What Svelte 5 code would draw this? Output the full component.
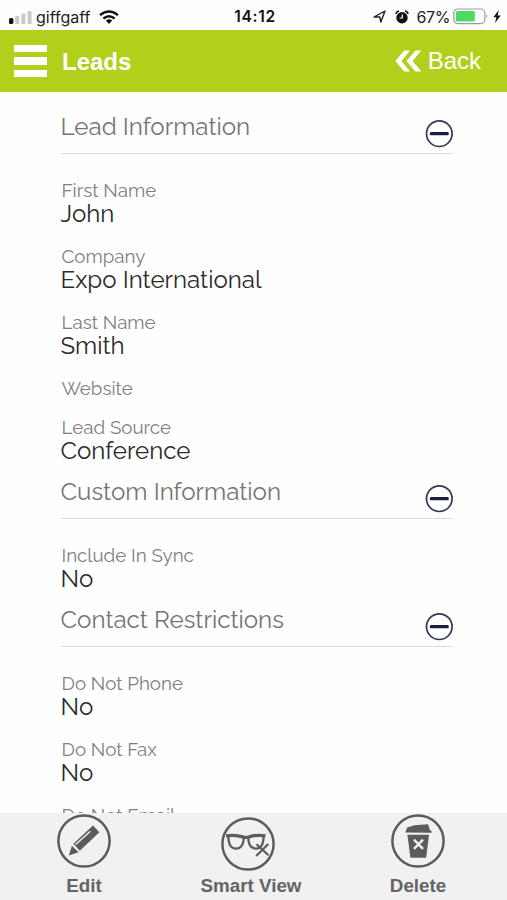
<script lang="ts">
  type Field = { label: string; value?: string };
  type Section = { title: string; fields: Field[] };

  const sections: Section[] = [
    {
      title: 'Lead Information',
      fields: [
        { label: 'First Name', value: 'John' },
        { label: 'Company', value: 'Expo International' },
        { label: 'Last Name', value: 'Smith' },
        { label: 'Website' },
        { label: 'Lead Source', value: 'Conference' },
      ],
    },
    {
      title: 'Custom Information',
      fields: [{ label: 'Include In Sync', value: 'No' }],
    },
    {
      title: 'Contact Restrictions',
      fields: [
        { label: 'Do Not Phone', value: 'No' },
        { label: 'Do Not Fax', value: 'No' },
        { label: 'Do Not Email' },
      ],
    },
  ];

  let closed = $state<Record<string, boolean>>({});
</script>

<div class="app">
  <div class="status">
    <div class="carrier">
      <svg width="24" height="14" viewBox="0 0 24 14">
        <rect x="0" y="8" width="4.4" height="6" rx="1.5" fill="#111" />
        <g fill="#c9c9c9">
          <rect x="6.2" y="6" width="4" height="8" rx="1" />
          <rect x="12.4" y="3.5" width="4" height="10.5" rx="1" />
          <rect x="18.6" y="1" width="4" height="13" rx="1" />
        </g>
      </svg>
      <span class="network">giffgaff</span>
      <svg class="wifi" width="20" height="14" viewBox="0 0 20 14">
        <g fill="none" stroke="#111" stroke-width="2.4">
          <path d="M1 5.2Q10-2.3 19 5.2" />
          <path d="M4.4 8.5Q10 3.8 15.6 8.5" />
        </g>
        <path d="M6.8 10.5Q10 7.8 13.2 10.5L10 14Z" fill="#111" />
      </svg>
    </div>
    <span class="time">14:12</span>
    <div class="power">
      <svg width="13" height="13" viewBox="0 0 13 13">
        <path d="M1 7L12 1L7.8 12L6.8 6.9Z" fill="none" stroke="#222" stroke-width="1.4" stroke-linejoin="round" />
      </svg>
      <svg class="alarm" width="14" height="14" viewBox="0 0 14 14">
        <circle cx="7" cy="7.7" r="5.7" fill="#111" />
        <path d="M1 4Q1.4 1.4 4 1M10 1Q12.6 1.4 13 4" fill="none" stroke="#111" stroke-width="1.6" />
        <path d="M7.3 4.5V8H4.6" fill="none" stroke="#fff" stroke-width="1.2" />
      </svg>
      <span class="percent">67%</span>
      <svg class="battery" width="36" height="17" viewBox="0 0 36 17">
        <rect x="0.8" y="1" width="31" height="14.6" rx="4" fill="#fff" stroke="#9b9b9b" stroke-width="1.2" />
        <rect x="2.8" y="3" width="19" height="10.6" rx="1.5" fill="#4cd964" />
        <path d="M33.5 6Q35.4 8.2 33.5 10.5Z" fill="#9b9b9b" />
      </svg>
      <svg class="bolt" width="8" height="13" viewBox="0 0 8 13">
        <path d="M5.8 0L0.4 7.2H3.4L2 13L7.7 5.4H4.6Z" fill="#111" />
      </svg>
    </div>
  </div>

  <header>
    <button class="menu" type="button" aria-label="Menu"><i></i><i></i><i></i></button>
    <h1>Leads</h1>
    <button class="back" type="button">
      <svg width="27" height="22" viewBox="0 0 27 22">
        <path d="M9.2 0.5H15L6.5 11L15 21.5H9.2L0.3 11ZM20.4 0.5H26.2L17.7 11L26.2 21.5H20.4L11.5 11Z" fill="#fff" />
      </svg>
      <span>Back</span>
    </button>
  </header>

  <main>
    {#each sections as s (s.title)}
      <section>
        <div class="head">
          <h2>{s.title}</h2>
          <button class="toggle" type="button" aria-label={s.title} onclick={() => (closed[s.title] = !closed[s.title])}>
            <svg width="28" height="28" viewBox="0 0 28 28">
              <circle cx="14.3" cy="13.7" r="12.8" fill="none" stroke="#343850" stroke-width="1.7" />
              <path d="M6.3 13.7H22.3" stroke="#171e41" stroke-width="3.2" stroke-linecap="round" />
            </svg>
          </button>
        </div>
        {#if !closed[s.title]}
          <dl>
            {#each s.fields as f (f.label)}
              <div class="field">
                <dt>{f.label}</dt>
                {#if f.value}
                  <dd>{f.value}</dd>
                {/if}
              </div>
            {/each}
          </dl>
        {/if}
      </section>
    {/each}
  </main>

  <footer>
    <button class="action" type="button">
      <svg width="54" height="54" viewBox="0 0 54 54">
        <circle cx="27" cy="27" r="25.6" fill="none" stroke="#5c5c5c" stroke-width="2.5" />
        <path d="M36 11.5L42.4 18.3L22.8 36.8L16.4 29.8Z" fill="#5c5c5c" />
        <path d="M14.8 31.8L21.6 38.2L11.8 41.5Z" fill="#5c5c5c" />
        <path d="M18.6 30.4L33.3 17.3" stroke="#f1f1f1" stroke-width="1.4" />
      </svg>
      <span>Edit</span>
    </button>
    <button class="action view" type="button">
      <svg width="54" height="54" viewBox="0 0 54 54">
        <circle cx="27" cy="27" r="25.6" fill="none" stroke="#5c5c5c" stroke-width="2.5" />
        <g fill="none" stroke="#5c5c5c" stroke-width="2.2" stroke-linejoin="round">
          <path d="M5 18.8Q14 17.4 22 19.9Q25 21 28 19.9Q36 17.4 44.5 18.8" stroke-width="3.2" />
          <path d="M7.4 19.5Q7.4 31.6 15 31.6Q22.4 31.6 22.8 20.5" />
          <path d="M27.2 20.5Q27.6 31.6 35.2 31.6Q42.2 31.6 42.7 19.5" />
          <path d="M35.5 27.2L47.5 38.2M47.3 27L35.2 39" />
        </g>
      </svg>
      <span>Smart View</span>
    </button>
    <button class="action" type="button">
      <svg width="54" height="54" viewBox="0 0 54 54">
        <circle cx="27" cy="27" r="25.6" fill="none" stroke="#5c5c5c" stroke-width="2.5" />
        <path d="M14.2 18.6L16.2 13.4L23.5 11.2L37 10.2L39 16.2L40.6 17V18.8Z" fill="#5c5c5c" />
        <path d="M16.4 20.8H38L35.2 43.7H19.4Z" fill="#5c5c5c" />
        <path d="M23 25.7L32 34.8M32 25.7L23 34.8" stroke="#f1f1f1" stroke-width="2.4" />
      </svg>
      <span>Delete</span>
    </button>
  </footer>
</div>

<style>
  :global(body) { background: #fff; }
  .app { height: 900px; display: flex; flex-direction: column; overflow: hidden; background: #fefefe; font-family: "Liberation Sans", Arial, sans-serif; }
  svg { display: block; flex: none; }
  button { border: 0; padding: 0; background: none; font: inherit; color: inherit; cursor: pointer; }

  .status { flex: none; height: 30px; display: grid; grid-template-columns: 1fr auto 1fr; align-items: center; padding: 3px 6px 0 9px; box-sizing: border-box; color: #222; }
  .carrier, .power { display: flex; align-items: center; }
  .network { margin-left: 3px; font: 16px/20px Inter, sans-serif; }
  .wifi { margin-left: 9px; }
  .time { font: 600 15.5px/20px Inter, sans-serif; letter-spacing: 0.7px; color: #111; }
  .power { justify-content: flex-end; }
  .alarm { margin-left: 9px; }
  .percent { margin-left: 8px; font: 16px/20px Inter, sans-serif; letter-spacing: -0.4px; }
  .battery { margin-left: 3px; }
  .bolt { margin-left: 4px; }

  header { flex: none; height: 62px; box-sizing: border-box; display: flex; align-items: center; padding: 0 26px 0 14px; background: #b1cf1b; color: #fff; }
  .menu { display: grid; gap: 5px; width: 33px; }
  .menu i { height: 7.5px; background: #fff; }
  h1 { margin: 2px 0 0 15px; font-size: 24px; line-height: 30px; font-weight: 700; }
  .back { display: flex; align-items: center; gap: 6px; margin-left: auto; font-size: 24px; line-height: 30px; }

  main { flex: 1; min-height: 0; overflow: hidden; padding: 8px 54px 0 61px; font-family: Raleway, Lato, sans-serif; white-space: nowrap; }
  .head { height: 54px; box-sizing: border-box; display: flex; justify-content: space-between; border-bottom: 1px solid #dcdcdc; }
  h2 { margin: 13px 0 0 -0.5px; font-size: 24.15px; line-height: 28px; font-weight: 400; color: #757575; }
  .toggle { align-self: flex-start; margin-top: 20px; }
  dl { display: flex; flex-direction: column; gap: 17px; margin: 0; padding-top: 26px; }
  .field { display: flex; flex-direction: column; }
  dt { padding-left: 0.5px; font-size: 18.75px; line-height: 20px; color: #808080; }
  dd { margin: 0 0 2px -0.5px; font-size: 24.1px; line-height: 27px; color: #2b2b2b; }
  dt:last-child { margin-bottom: 2px; }
  .field:last-child dd { margin-bottom: 1px; }

  footer { flex: none; height: 87px; display: grid; grid-template-columns: repeat(3, 167px); background: #f1f1f1; color: #646464; }
  .action { display: flex; flex-direction: column; align-items: center; justify-content: space-between; padding: 1px 0 4px; font-size: 18.8px; line-height: 20px; font-weight: 700; }
  .action span { margin-left: 1px; }
  .view { padding-top: 4px; }
  .view svg { margin-right: 6px; }
</style>
